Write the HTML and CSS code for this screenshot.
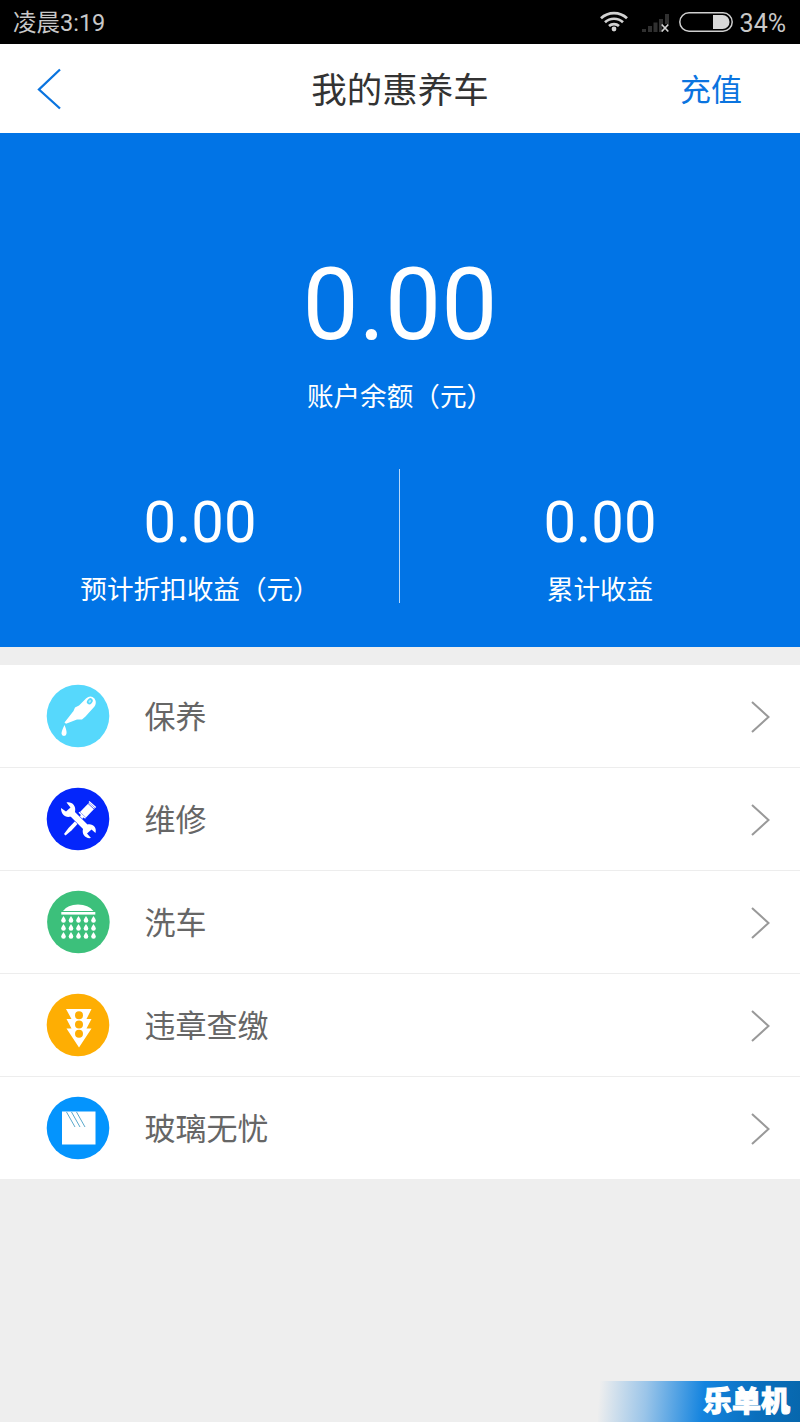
FILE: index.html
```html
<!DOCTYPE html>
<html lang="zh-CN">
<head>
<meta charset="utf-8">
<title>我的惠养车</title>
<link rel="stylesheet" href="styles.css">
</head>
<body>
<div class="screen">
  <div class="status">
    <span class="time">凌晨3:19</span>
    <div class="indicators">
      <svg class="wifi" width="28" height="22" viewBox="0 0 28 22" fill="none" stroke="#d2d2d2" stroke-width="2.7">
        <path d="M1 8.2a19 19 0 0 1 26 0M5 12.3a13.2 13.2 0 0 1 18 0M9 16a7.4 7.4 0 0 1 10 0"/>
        <circle cx="14" cy="19" r="2.4" fill="#d2d2d2" stroke="none"/>
      </svg>
      <svg class="signal" width="28" height="20" viewBox="0 0 28 20">
        <path fill="#303030" d="M0 16h4v3H0zM6 13h4v6H6zM11.500 9.500h4v9.500h-4zM17 6h4v5.500l-1 3 1 4.500h-4zM23 1h4v10h-4z"/>
        <path d="M19.700 11.500l6.600 7M26.300 11.500l-6.600 7" stroke="#d2d2d2" stroke-width="1.700"/>
      </svg>
      <svg class="battery" width="54" height="20" viewBox="0 0 54 20">
        <rect x=".8" y=".8" width="52.400" height="18.400" rx="9.200" fill="none" stroke="#cfcfcf" stroke-width="1.500"/>
        <path d="M34 3h9.500a7 7 0 0 1 0 14H34z" fill="#d8d8d8"/>
      </svg>
      <span class="percent">34%</span>
    </div>
  </div>

  <div class="header">
    <svg class="back" width="26" height="44" viewBox="0 0 26 44" fill="none" stroke="#0a74df" stroke-width="2.300"><path d="M24 2.500L3 22.500L24 41.500"/></svg>
    <span class="title">我的惠养车</span>
    <span class="recharge">充值</span>
  </div>

  <div class="hero">
    <div class="balance">0.00</div>
    <div class="label">账户余额（元）</div>
    <div class="stats">
      <div class="stat"><div class="value">0.00</div><div class="label">预计折扣收益（元）</div></div>
      <div class="divider"></div>
      <div class="stat"><div class="value">0.00</div><div class="label">累计收益</div></div>
    </div>
  </div>

  <div class="list">
    <div class="row">
      <svg class="icon" viewBox="0 0 64 64"><circle cx="32" cy="32" r="31.300" fill="#56d8fc"/>
        <path fill="#fff" d="M18.500 38.500L27.500 27L29 23.500L33 21.500L40 14.500Q44.500 10.500 48.500 14.500Q51 18.500 48.500 22.500L39.500 32.500L36 35.500L31 35.500L20 39.800Z"/>
        <ellipse cx="43.800" cy="17.300" rx="2.600" ry="3.300" transform="rotate(40 43.800 17.300)" fill="#56d8fc"/>
        <ellipse cx="43.800" cy="17.300" rx="1" ry="1.500" transform="rotate(40 43.800 17.300)" fill="#b5eefd"/>
        <path fill="#fff" d="M18.500 41Q21 47 20.500 49.500a2.500 2.500 0 0 1-5 0Q15.500 47 18.500 41Z"/></svg>
      <span class="name">保养</span>
      <svg class="arrow" viewBox="0 0 22 34"><path d="M2 2L18.500 17L2 32"/></svg>
    </div>
    <div class="row">
      <svg class="icon" viewBox="0 0 64 64"><circle cx="32" cy="32" r="31.300" fill="#0426fb"/>
        <path fill="#fff" d="M35.500 27.500L38 30L25.500 43.500L19.500 48.500L18 47L22.500 41Z"/>
        <path d="M24 24.500L42.500 43" stroke="#0426fb" stroke-width="7.200"/>
        <path d="M24 24.500L42.500 43" stroke="#fff" stroke-width="6.200"/>
        <path fill="#fff" d="M20.500 15.500C26 14.500 30.500 19 29 25L25 29.500C19.500 31 15 28 15 21L20 24.500L24.500 20.500Z"/>
        <path fill="#fff" d="M45 51C39.500 52 35.500 47 37 42L41.500 37.500C47 36.500 51 40.500 49.500 46L45.500 42.500L41 46.500Z"/>
        <path fill="#fff" d="M34 25L43 15.800L49 21L40 30.500Z"/>
        <path d="M43 14.500L49.800 20.500M33 25.200L39.500 31.200" stroke="#fff" stroke-width="1.400"/>
        <path d="M42 16.500L48 22" stroke="#0426fb" stroke-width=".7"/></svg>
      <span class="name">维修</span>
      <svg class="arrow" viewBox="0 0 22 34"><path d="M2 2L18.500 17L2 32"/></svg>
    </div>
    <div class="row">
      <svg class="icon" viewBox="0 0 64 64">
        <defs>
          <path id="drop" d="M0-3.500Q2.300-.2 2.300 1A2.300 2.300 0 0 1-2.300 1Q-2.300-.2 0-3.500Z"/>
          <g id="drops"><use href="#drop" x="17.500"/><use href="#drop" x="25"/><use href="#drop" x="32.500"/><use href="#drop" x="40"/><use href="#drop" x="47.500"/></g>
        </defs>
        <circle cx="32.400" cy="32" r="31.300" fill="#3cc07b"/>
        <g fill="#fff"><path d="M17 21Q21.500 14.500 32 14.500T47.500 21Z"/><rect x="15.300" y="22" width="34" height="2.600"/>
        <use href="#drops" y="29.500"/><use href="#drops" y="37.500"/><use href="#drops" y="45.500"/></g></svg>
      <span class="name">洗车</span>
      <svg class="arrow" viewBox="0 0 22 34"><path d="M2 2L18.500 17L2 32"/></svg>
    </div>
    <div class="row">
      <svg class="icon" viewBox="0 0 64 64"><circle cx="32" cy="32" r="31.300" fill="#feae03"/>
        <path fill="#fff" d="M20 16H45.500L40.500 26H45.500L40.500 35.500H45.500L33 54.500L20.500 35.500H25.500L20.500 26H25.500Z"/>
        <g fill="#feae03"><circle cx="33" cy="22.200" r="4"/><circle cx="33" cy="31.500" r="4"/><circle cx="33" cy="40.800" r="4"/></g></svg>
      <span class="name">违章查缴</span>
      <svg class="arrow" viewBox="0 0 22 34"><path d="M2 2L18.500 17L2 32"/></svg>
    </div>
    <div class="row">
      <svg class="icon" viewBox="0 0 64 64"><circle cx="32" cy="32" r="31.300" fill="#0494fd"/>
        <rect x="16" y="15.500" width="33.500" height="33" fill="#fff"/>
        <path d="M20.500 16L29 31M25.500 16L34 31M30.500 16L39 31" stroke="#5aa9cc" stroke-width="1"/></svg>
      <span class="name">玻璃无忧</span>
      <svg class="arrow" viewBox="0 0 22 34"><path d="M2 2L18.500 17L2 32"/></svg>
    </div>
  </div>
  <div class="watermark">乐单机</div>
</div>
</body>
</html>
```

FILE: styles.css
```css
* { box-sizing: border-box; }
body { margin: 0; }
.screen {
  position: relative;
  width: 800px;
  height: 1422px;
  overflow: hidden;
  background: #eee;
  font-family: Roboto, "Noto Sans CJK SC", sans-serif;
}
svg { display: block; flex: none; }
.status {
  display: flex;
  justify-content: space-between;
  height: 44px;
  padding: 0 14px 0 13px;
  background: #000;
  color: #c8c8c8;
  line-height: 47px;
}
.time { font-size: 23.500px; }
.indicators { display: flex; }
.wifi { margin: 10px 14px 0 0; }
.signal { margin: 13px 9px 0 0; }
.battery { margin: 12px 7px 0 0; }
.percent { font-size: 25px; }
.header {
  display: grid;
  grid-template-columns: 120px 1fr 120px;
  align-items: center;
  height: 89px;
  background: #fff;
  line-height: 50px;
}
.back { margin-left: 36px; }
.title {
  justify-self: center;
  color: #333;
  font-size: 35.500px;
  padding-top: 4px;
}
.recharge { color: #0a74df; font-size: 31px; padding-top: 4px; }
.hero {
  height: 514px;
  padding-top: 122px;
  background: #0174e6;
  color: #fff;
  text-align: center;
}
.balance { font-size: 100px; line-height: 100px; }
.label { font-size: 26.600px; line-height: 40px; margin-top: 22px; }
.stats { display: flex; margin-top: 52px; }
.divider { flex: none; width: 1px; height: 134px; margin: 0 0 0 -1px; background: #b5d8fa; }
.stat { flex: 1; padding-top: 23px; }
.value { font-size: 58px; line-height: 60px; }
.stat .label { margin-top: 18px; }
.list { margin-top: 18px; background: #fff; }
.row {
  display: flex;
  align-items: center;
  height: 103px;
  padding: 0 28px 0 46px;
  border-bottom: 1px solid #ededed;
}
.row:last-child { height: 102px; border-bottom: 0; }
.icon { width: 64px; height: 64px; }
.name { flex: 1; margin-left: 34.500px; color: #666; font-size: 31px; line-height: 50px; padding-top: 4px; }
.arrow { width: 22px; height: 34px; margin-top: 1px; fill: none; stroke: #999; stroke-width: 2; }
.watermark {
  position: absolute;
  right: 0;
  bottom: 0;
  width: 202px;
  height: 41px;
  padding-right: 10px;
  background: linear-gradient(95deg, rgba(30, 135, 225, 0) 1%, rgba(30, 135, 225, .4) 24%, #1484df 52%, #0a6fbd 78%, #0767ad 100%);
  color: #fff;
  font-size: 29px;
  font-weight: 900;
  line-height: 43px;
  text-align: right;
  -webkit-text-stroke: 1px #fff;
}
```
